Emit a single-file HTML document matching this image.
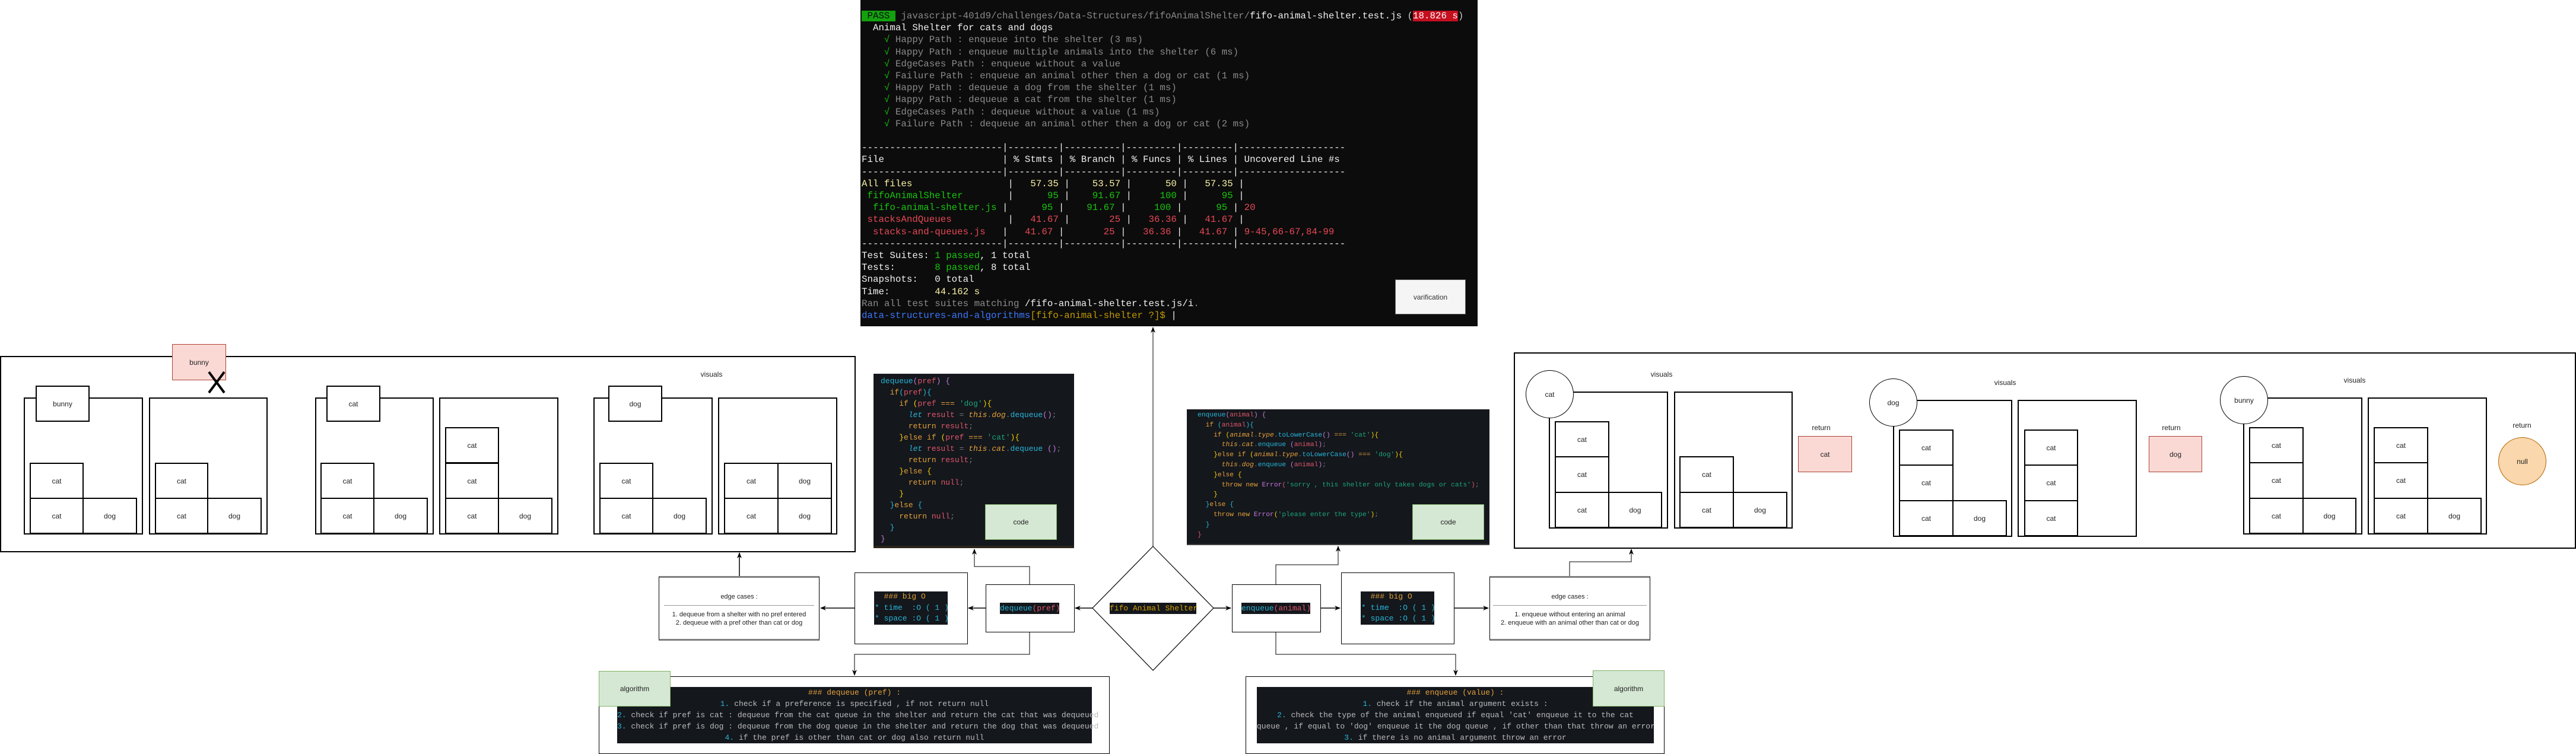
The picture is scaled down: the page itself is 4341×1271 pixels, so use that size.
<!DOCTYPE html>
<html><head><meta charset="utf-8">
<style>
*{margin:0;padding:0;box-sizing:border-box}
body{width:4341px;height:1271px;background:#fff;position:relative;overflow:hidden;font-family:"Liberation Sans",sans-serif}
.a{position:absolute}
.b{position:absolute;border:2px solid #000;background:#fff;display:flex;align-items:center;justify-content:center;font-size:12px;color:#222}
.o{position:absolute;border:2px solid #000;background:transparent}
.lbl{position:absolute;font-size:12px;color:#222;transform:translate(-50%,-50%);white-space:nowrap}
.red{background:#fad9d5;border:1.5px solid #ae4132}
.grn{position:absolute;background:#d5e8d4;border:1.5px solid #82b366;display:flex;align-items:center;justify-content:center;font-size:12px;color:#222}
.circ{position:absolute;border:1.5px solid #000;border-radius:50%;background:#fff;display:flex;align-items:center;justify-content:center;font-size:12px;color:#222}
.term{position:absolute;left:1450px;top:0;width:1040px;height:550px;background:#0c0c0c;font-family:"Liberation Mono",monospace;font-size:15.8px;line-height:20.2px;color:#cccccc;white-space:pre;padding:17px 0 0 2px}
.g{color:#8a8a8a}.w{color:#f2f2f2}.gr{color:#16c60c}.y{color:#f9f1a5}.r{color:#e74856}.bl{color:#3b78ff}.yy{color:#c19c00}
.code{position:absolute;background:#14171c;font-family:"Liberation Mono",monospace;white-space:pre;color:#ccc}
.cy{color:#27b5d8}.pk{color:#e0566b}.or{color:#e5a13a}.sg{color:#1aa57a}.pu{color:#c678dd}.ye{color:#f3d000}.it{font-style:italic}.dim{color:#777}
.dk{position:absolute;background:#14171c;font-family:"Liberation Mono",monospace;font-size:13px;line-height:19px;text-align:center;white-space:pre;color:#bbb}
.edge{position:absolute;border:1.5px solid #000;border-top:3px solid #808080;border-bottom:3px solid #808080;background:#fff;font-size:11px;color:#222;text-align:center}
</style></head><body>

<!-- Terminal -->
<div class="term"><span style="background:#13a10e;color:#0c0c0c"> PASS </span> <span class="g">javascript-401d9/challenges/Data-Structures/fifoAnimalShelter/</span><span class="w">fifo-animal-shelter.test.js</span> (<span style="background:#c50f1f;color:#fff">18.826 s</span>)
<span class="w">  Animal Shelter for cats and dogs</span>
<span class="gr">    √</span><span class="g"> Happy Path : enqueue into the shelter (3 ms)</span>
<span class="gr">    √</span><span class="g"> Happy Path : enqueue multiple animals into the shelter (6 ms)</span>
<span class="gr">    √</span><span class="g"> EdgeCases Path : enqueue without a value</span>
<span class="gr">    √</span><span class="g"> Failure Path : enqueue an animal other then a dog or cat (1 ms)</span>
<span class="gr">    √</span><span class="g"> Happy Path : dequeue a dog from the shelter (1 ms)</span>
<span class="gr">    √</span><span class="g"> Happy Path : dequeue a cat from the shelter (1 ms)</span>
<span class="gr">    √</span><span class="g"> EdgeCases Path : dequeue without a value (1 ms)</span>
<span class="gr">    √</span><span class="g"> Failure Path : dequeue an animal other then a dog or cat (2 ms)</span>

<span class="w">-------------------------|---------|----------|---------|---------|-------------------
File                     | % Stmts | % Branch | % Funcs | % Lines | Uncovered Line #s
-------------------------|---------|----------|---------|---------|-------------------</span>
<span class="y">All files</span><span class="w">                </span><span class="w"> |</span><span class="y">   57.35 </span><span class="w">|</span><span class="y">    53.57 </span><span class="w">|</span><span class="y">      50 </span><span class="w">|</span><span class="y">   57.35 </span><span class="w">|</span>
<span class="gr"> fifoAnimalShelter</span>       <span class="w"> |</span><span class="gr">      95 </span><span class="w">|</span><span class="gr">    91.67 </span><span class="w">|</span><span class="gr">     100 </span><span class="w">|</span><span class="gr">      95 </span><span class="w">|</span>
<span class="gr">  fifo-animal-shelter.js</span><span class="w"> |</span><span class="gr">      95 </span><span class="w">|</span><span class="gr">    91.67 </span><span class="w">|</span><span class="gr">     100 </span><span class="w">|</span><span class="gr">      95 </span><span class="w">|</span><span class="r"> 20</span>
<span class="r"> stacksAndQueues</span>         <span class="w"> |</span><span class="r">   41.67 </span><span class="w">|</span><span class="r">       25 </span><span class="w">|</span><span class="r">   36.36 </span><span class="w">|</span><span class="r">   41.67 </span><span class="w">|</span>
<span class="r">  stacks-and-queues.js</span>  <span class="w"> |</span><span class="r">   41.67 </span><span class="w">|</span><span class="r">       25 </span><span class="w">|</span><span class="r">   36.36 </span><span class="w">|</span><span class="r">   41.67 </span><span class="w">|</span><span class="r"> 9-45,66-67,84-99</span>
<span class="w">-------------------------|---------|----------|---------|---------|-------------------</span>
<span class="w">Test Suites: </span><span class="gr">1 passed</span><span class="w">, 1 total</span>
<span class="w">Tests:       </span><span class="gr">8 passed</span><span class="w">, 8 total</span>
<span class="w">Snapshots:   0 total</span>
<span class="w">Time:        </span><span class="y">44.162 s</span>
<span class="g">Ran all test suites matching </span><span class="w">/fifo-animal-shelter.test.js/i</span><span class="g">.</span>
<span class="bl">data-structures-and-algorithms</span><span class="yy">[fifo-animal-shelter ?]$</span> <span class="w">|</span></div>
<div class="a" style="left:2351px;top:471px;width:119px;height:59px;background:#f5f5f5;border:1.5px solid #666;display:flex;align-items:center;justify-content:center;font-size:12px;color:#333">varification</div>

<!-- LEFT PANEL -->
<div class="o" style="left:0;top:600px;width:1442px;height:331px"></div>
<div class="lbl" style="left:1199px;top:631px">visuals</div>
<!-- group1 -->
<div class="o" style="left:40px;top:670px;width:201px;height:231px"></div>
<div class="o" style="left:251px;top:670px;width:200px;height:231px"></div>
<div class="b" style="left:60px;top:650px;width:91px;height:61px">bunny</div>
<div class="b" style="left:50px;top:780px;width:91px;height:61px">cat</div>
<div class="b" style="left:50px;top:839px;width:91px;height:61px">cat</div>
<div class="b" style="left:139px;top:839px;width:92px;height:61px">dog</div>
<div class="b" style="left:261px;top:780px;width:90px;height:61px">cat</div>
<div class="b" style="left:261px;top:839px;width:90px;height:61px">cat</div>
<div class="b" style="left:349px;top:839px;width:92px;height:61px">dog</div>
<div class="b red" style="left:290px;top:580px;width:91px;height:61px">bunny</div>
<!-- group2 -->
<div class="o" style="left:531px;top:670px;width:200px;height:231px"></div>
<div class="o" style="left:740px;top:670px;width:201px;height:231px"></div>
<div class="b" style="left:550px;top:650px;width:91px;height:61px">cat</div>
<div class="b" style="left:540px;top:780px;width:91px;height:61px">cat</div>
<div class="b" style="left:540px;top:839px;width:91px;height:61px">cat</div>
<div class="b" style="left:629px;top:839px;width:92px;height:61px">dog</div>
<div class="b" style="left:750px;top:720px;width:91px;height:61px">cat</div>
<div class="b" style="left:750px;top:780px;width:91px;height:61px">cat</div>
<div class="b" style="left:750px;top:839px;width:91px;height:61px">cat</div>
<div class="b" style="left:839px;top:839px;width:92px;height:61px">dog</div>
<!-- group3 -->
<div class="o" style="left:1000px;top:670px;width:201px;height:231px"></div>
<div class="o" style="left:1210px;top:670px;width:201px;height:231px"></div>
<div class="b" style="left:1025px;top:650px;width:91px;height:61px">dog</div>
<div class="b" style="left:1010px;top:780px;width:91px;height:61px">cat</div>
<div class="b" style="left:1010px;top:839px;width:91px;height:61px">cat</div>
<div class="b" style="left:1099px;top:839px;width:92px;height:61px">dog</div>
<div class="b" style="left:1220px;top:780px;width:92px;height:61px">cat</div>
<div class="b" style="left:1310px;top:780px;width:92px;height:61px">dog</div>
<div class="b" style="left:1220px;top:839px;width:92px;height:61px">cat</div>
<div class="b" style="left:1310px;top:839px;width:92px;height:61px">dog</div>

<!-- RIGHT PANEL -->
<div class="o" style="left:2551px;top:594px;width:1790px;height:331px"></div>
<!-- g1 -->
<div class="lbl" style="left:2800px;top:631px">visuals</div>
<div class="o" style="left:2610px;top:660px;width:201px;height:231px"></div>
<div class="o" style="left:2821px;top:660px;width:200px;height:231px"></div>
<div class="b" style="left:2620px;top:710px;width:92px;height:61px">cat</div>
<div class="b" style="left:2620px;top:769px;width:92px;height:62px">cat</div>
<div class="b" style="left:2620px;top:829px;width:92px;height:61px">cat</div>
<div class="b" style="left:2710px;top:829px;width:91px;height:61px">dog</div>
<div class="b" style="left:2830px;top:769px;width:92px;height:62px">cat</div>
<div class="b" style="left:2830px;top:829px;width:92px;height:61px">cat</div>
<div class="b" style="left:2920px;top:829px;width:92px;height:61px">dog</div>
<div class="circ" style="left:2571px;top:624px;width:81px;height:81px">cat</div>
<div class="lbl" style="left:3069px;top:721px">return</div>
<div class="b red" style="left:3030px;top:735px;width:91px;height:61px">cat</div>
<!-- g2 -->
<div class="lbl" style="left:3379px;top:645px">visuals</div>
<div class="o" style="left:3190px;top:674px;width:201px;height:231px"></div>
<div class="o" style="left:3400px;top:674px;width:201px;height:231px"></div>
<div class="b" style="left:3200px;top:724px;width:92px;height:61px">cat</div>
<div class="b" style="left:3200px;top:783px;width:92px;height:62px">cat</div>
<div class="b" style="left:3200px;top:843px;width:92px;height:61px">cat</div>
<div class="b" style="left:3290px;top:843px;width:92px;height:61px">dog</div>
<div class="b" style="left:3411px;top:724px;width:91px;height:61px">cat</div>
<div class="b" style="left:3411px;top:783px;width:91px;height:62px">cat</div>
<div class="b" style="left:3411px;top:843px;width:91px;height:61px">cat</div>
<div class="circ" style="left:3150px;top:638px;width:81px;height:81px">dog</div>
<div class="lbl" style="left:3659px;top:721px">return</div>
<div class="b red" style="left:3621px;top:735px;width:90px;height:61px">dog</div>
<!-- g3 -->
<div class="lbl" style="left:3968px;top:641px">visuals</div>
<div class="o" style="left:3780px;top:670px;width:201px;height:231px"></div>
<div class="o" style="left:3990px;top:670px;width:201px;height:231px"></div>
<div class="b" style="left:3790px;top:720px;width:92px;height:61px">cat</div>
<div class="b" style="left:3790px;top:779px;width:92px;height:62px">cat</div>
<div class="b" style="left:3790px;top:839px;width:92px;height:61px">cat</div>
<div class="b" style="left:3880px;top:839px;width:91px;height:61px">dog</div>
<div class="b" style="left:4000px;top:720px;width:92px;height:61px">cat</div>
<div class="b" style="left:4000px;top:779px;width:92px;height:62px">cat</div>
<div class="b" style="left:4000px;top:839px;width:92px;height:61px">cat</div>
<div class="b" style="left:4090px;top:839px;width:92px;height:61px">dog</div>
<div class="circ" style="left:3741px;top:634px;width:81px;height:81px">bunny</div>
<div class="lbl" style="left:4250px;top:717px">return</div>
<div class="circ" style="left:4210px;top:737px;width:81px;height:81px;background:#fad7ac;border-color:#b46504">null</div>

<!-- dequeue code -->
<div class="code" style="left:1472px;top:630px;width:338px;height:294px;font-size:13px;line-height:19px;padding:3px 0 0 12px;border-bottom:4px solid #2a2418"><span class="cy">dequeue</span><span class="pu">(</span><span class="pk">pref</span><span class="pu">)</span> <span class="pu">{</span>
  <span class="or">if</span><span class="cy">(</span><span class="pk">pref</span><span class="cy">){</span>
    <span class="or">if</span> <span class="ye">(</span><span class="pk">pref</span> <span class="or">===</span> <span class="sg">'dog'</span><span class="ye">){</span>
      <span class="cy it">let</span> <span class="pk">result</span> <span class="dim">=</span> <span class="or it">this</span><span class="dim">.</span><span class="or it">dog</span><span class="dim">.</span><span class="cy">dequeue</span><span class="pu">()</span><span class="dim">;</span>
      <span class="or">return</span> <span class="pk">result</span><span class="dim">;</span>
    <span class="ye">}</span><span class="or">else if</span> <span class="ye">(</span><span class="pk">pref</span> <span class="or">===</span> <span class="sg">'cat'</span><span class="ye">){</span>
      <span class="cy it">let</span> <span class="pk">result</span> <span class="dim">=</span> <span class="or it">this</span><span class="dim">.</span><span class="or it">cat</span><span class="dim">.</span><span class="cy">dequeue</span> <span class="pu">()</span><span class="dim">;</span>
      <span class="or">return</span> <span class="pk">result</span><span class="dim">;</span>
    <span class="ye">}</span><span class="or">else</span> <span class="ye">{</span>
      <span class="or">return</span> <span class="pk">null</span><span class="dim">;</span>
    <span class="ye">}</span>
  <span class="cy">}</span><span class="or">else</span> <span class="cy">{</span>
    <span class="or">return</span> <span class="pk">null</span><span class="dim">;</span>
  <span class="cy">}</span>
<span class="pu">}</span></div>
<div class="grn" style="left:1660px;top:850px;width:121px;height:60px">code</div>

<!-- enqueue code -->
<div class="code" style="left:2000px;top:690px;width:510px;height:229px;font-size:11.3px;line-height:16.8px;padding:2px 0 0 18px;border-bottom:2px solid #444"><span class="cy">enqueue</span><span class="pu">(</span><span class="pk">animal</span><span class="pu">)</span> <span class="pu">{</span>
  <span class="or">if</span> <span class="cy">(</span><span class="pk">animal</span><span class="cy">){</span>
    <span class="or">if</span> <span class="ye">(</span><span class="or it">animal</span><span class="dim">.</span><span class="or it">type</span><span class="dim">.</span><span class="cy">toLowerCase</span><span class="pu">()</span> <span class="or">===</span> <span class="sg">'cat'</span><span class="ye">){</span>
      <span class="or it">this</span><span class="dim">.</span><span class="or it">cat</span><span class="dim">.</span><span class="cy">enqueue</span> <span class="pu">(</span><span class="pk">animal</span><span class="pu">)</span><span class="dim">;</span>
    <span class="ye">}</span><span class="or">else if</span> <span class="ye">(</span><span class="or it">animal</span><span class="dim">.</span><span class="or it">type</span><span class="dim">.</span><span class="cy">toLowerCase</span><span class="pu">()</span> <span class="or">===</span> <span class="sg">'dog'</span><span class="ye">){</span>
      <span class="or it">this</span><span class="dim">.</span><span class="or it">dog</span><span class="dim">.</span><span class="cy">enqueue</span> <span class="pu">(</span><span class="pk">animal</span><span class="pu">)</span><span class="dim">;</span>
    <span class="ye">}</span><span class="or">else</span> <span class="ye">{</span>
      <span class="or">throw new</span> <span class="pu">Error</span><span class="pk">(</span><span class="sg">'sorry , this shelter only takes dogs or cats'</span><span class="pk">)</span><span class="dim">;</span>
    <span class="ye">}</span>
  <span class="cy">}</span><span class="or">else</span> <span class="cy">{</span>
    <span class="or">throw new</span> <span class="pu">Error</span><span class="ye">(</span><span class="sg">'please enter the type'</span><span class="ye">)</span><span class="dim">;</span>
  <span class="cy">}</span>
<span class="pk">}</span></div>
<div class="grn" style="left:2380px;top:850px;width:121px;height:60px">code</div>

<!-- dequeue flow -->
<div class="edge" style="left:1110px;top:971px;width:271px;height:109px">
<div style="position:absolute;top:26px;width:100%">edge cases :</div>
<div style="position:absolute;left:8px;right:8px;top:46px;border-top:1.5px solid #999"></div>
<div style="position:absolute;top:55px;width:100%;line-height:14px">1. dequeue from a shelter with no pref entered<br>2. dequeue with a pref other than cat or dog</div></div>
<div class="a" style="left:1440px;top:965px;width:191px;height:121px;border:1.5px solid #000"></div>
<div class="dk" style="left:1473px;top:997px;width:124px;height:56px;text-align:left;line-height:18.7px;padding-left:1px"><span class="or">  ### big O</span>
<span class="cy">* time  :O ( 1 )</span>
<span class="cy">* space :O ( 1 )</span></div>
<div class="a" style="left:1661px;top:985px;width:150px;height:81px;border:1.5px solid #000"></div>
<div class="dk" style="left:1685px;top:1016px;width:100px;height:19px;font-size:13px;line-height:19px"><span class="cy">dequeue</span><span class="pk">(pref)</span></div>
<div class="a" style="left:1009px;top:1140px;width:861px;height:131px;border:1.5px solid #000"></div>
<div class="dk" style="left:1040px;top:1158px;width:800px;height:95px;padding-top:0"><span class="or">### dequeue (pref) :</span>
<span class="cy">1.</span> check if a preference is specified , if not return null
<span class="cy">2.</span> check if pref is cat : dequeue from the cat queue in the shelter and return the cat that was dequeued
<span class="cy">3.</span> check if pref is dog : dequeue from the dog queue in the shelter and return the dog that was dequeued
<span class="cy">4.</span> if the pref is other than cat or dog also return null</div>
<div class="grn" style="left:1009px;top:1131px;width:121px;height:60px">algorithm</div>

<!-- diamond label -->
<div class="dk" style="left:1870px;top:1016px;width:146px;height:19px;color:#d7a000">fifo Animal Shelter</div>

<!-- enqueue flow -->
<div class="a" style="left:2076px;top:985px;width:150px;height:81px;border:1.5px solid #000"></div>
<div class="dk" style="left:2092px;top:1016px;width:116px;height:19px"><span class="cy">enqueue</span><span class="pk">(animal)</span></div>
<div class="a" style="left:2260px;top:965px;width:191px;height:121px;border:1.5px solid #000"></div>
<div class="dk" style="left:2293px;top:997px;width:124px;height:56px;text-align:left;line-height:18.7px;padding-left:1px"><span class="or">  ### big O</span>
<span class="cy">* time  :O ( 1 )</span>
<span class="cy">* space :O ( 1 )</span></div>
<div class="edge" style="left:2510px;top:971px;width:271px;height:109px">
<div style="position:absolute;top:26px;width:100%">edge cases :</div>
<div style="position:absolute;left:5px;right:5px;top:46px;border-top:1.5px solid #999"></div>
<div style="position:absolute;top:55px;width:100%;line-height:14px">1. enqueue without entering an animal<br>2. enqueue with an animal other than cat or dog</div></div>
<div class="a" style="left:2099px;top:1140px;width:706px;height:131px;border:1.5px solid #000"></div>
<div class="dk" style="left:2118px;top:1158px;width:669px;height:95px"><span class="or">### enqueue (value) :</span>
<span class="cy">1.</span> check if the animal argument exists :
<span class="cy">2.</span> check the type of the animal enqueued if equal 'cat' enqueue it to the cat
queue , if equal to 'dog' enqueue it the dog queue , if other than that throw an error
<span class="cy">3.</span> if there is no animal argument throw an error</div>
<div class="grn" style="left:2684px;top:1130px;width:121px;height:61px">algorithm</div>

<!-- connectors -->
<svg class="a" style="left:0;top:0" width="4341" height="1271" viewBox="0 0 4341 1271">
<defs><marker id="ah" markerWidth="10" markerHeight="10" refX="9" refY="5" orient="auto" markerUnits="userSpaceOnUse"><path d="M0,1 L10,5 L0,9 L3,5 Z" fill="#000"/></marker></defs>
<g fill="none" stroke="#555" stroke-width="1.5">
<path d="M1943,921 V552" marker-end="url(#ah)"/>
<path d="M1841,1025 H1812" stroke="#000" marker-end="url(#ah)"/>
<path d="M1661,1025 H1632" stroke="#000" marker-end="url(#ah)"/>
<path d="M1440,1025 H1383" stroke="#000" marker-end="url(#ah)"/>
<path d="M1246,971 V932" stroke="#000" marker-end="url(#ah)"/>
<path d="M1735,985 V955 H1642 V926" marker-end="url(#ah)"/>
<path d="M1735,1066 V1103 H1440 V1138" marker-end="url(#ah)"/>
<path d="M2045,1025 H2074" stroke="#000" marker-end="url(#ah)"/>
<path d="M2226,1025 H2258" stroke="#000" marker-end="url(#ah)"/>
<path d="M2451,1025 H2508" stroke="#000" marker-end="url(#ah)"/>
<path d="M2645,971 V947 H2749 V926" marker-end="url(#ah)"/>
<path d="M2150,985 V952 H2255 V921" marker-end="url(#ah)"/>
<path d="M2150,1066 V1103 H2453 V1138" marker-end="url(#ah)"/>
<polygon points="1943,921 2045,1025 1943,1130 1841,1025" stroke="#000" stroke-width="1.2"/>
</g>
<g stroke="#000" stroke-width="4"><line x1="352" y1="627" x2="378" y2="662"/><line x1="378" y1="627" x2="352" y2="662"/></g>
</svg>
</body></html>
